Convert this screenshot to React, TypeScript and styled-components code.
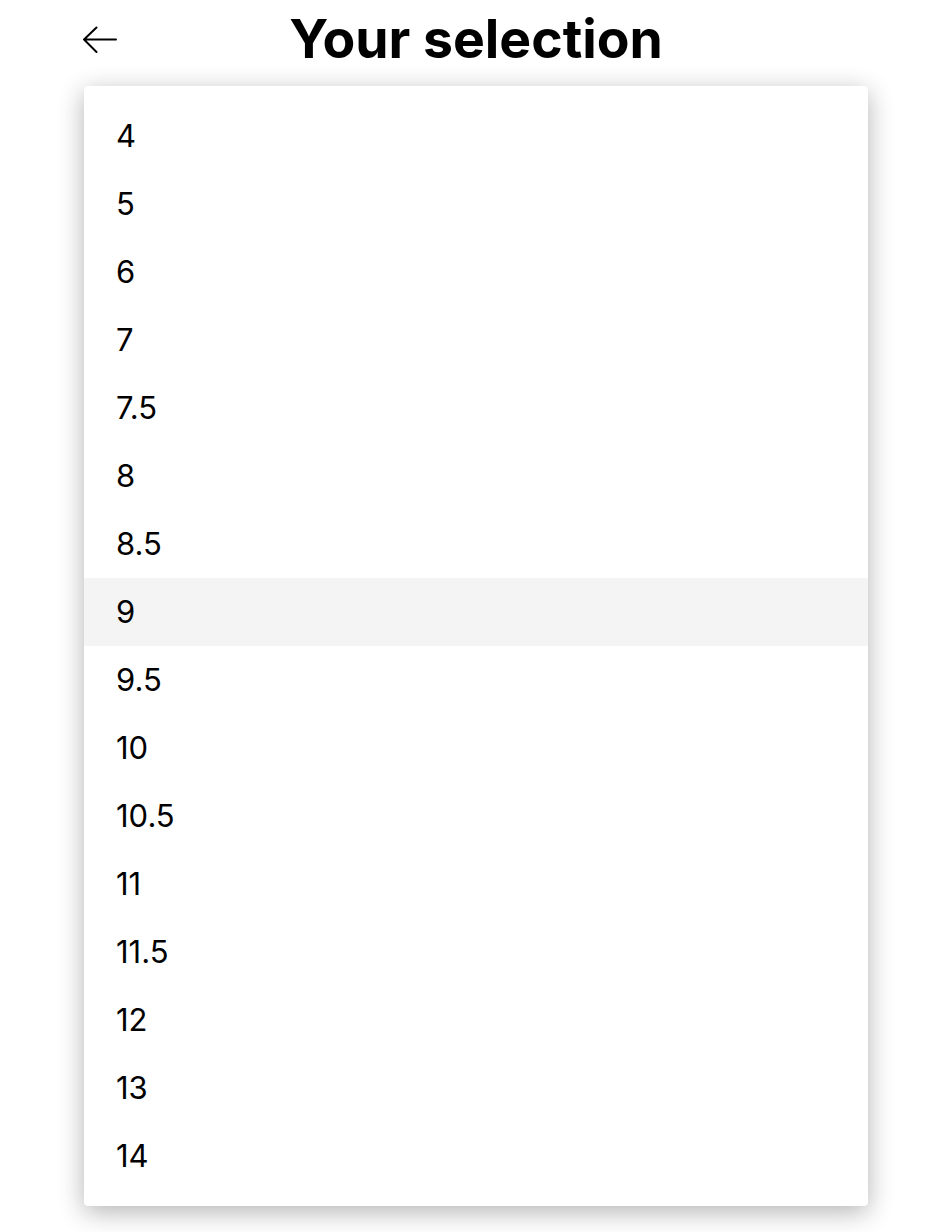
import styled, { createGlobalStyle } from "styled-components";

const GlobalStyle = createGlobalStyle`
  body {
    margin: 0;
    background: #ffffff;
    font-family: Inter, "Noto Sans", sans-serif;
    color: #000000;
  }
`;

const Page = styled.div`
  width: 784px;
  margin-left: 84px;
  padding-bottom: 26px;
`;

const Header = styled.div`
  position: relative;
  display: flex;
  align-items: center;
  justify-content: center;
  height: 78px;
`;

const BackButton = styled.button`
  position: absolute;
  left: -4px;
  top: 22px;
  width: 40px;
  height: 34px;
  padding: 0;
  border: none;
  background: none;
  cursor: pointer;
  display: flex;
  align-items: center;
  justify-content: center;
`;

const Title = styled.h1`
  margin: 0;
  font-size: 53.5px;
  font-weight: 700;
  line-height: 76px;
`;

const Panel = styled.ul`
  list-style: none;
  margin: 8px 0 0;
  padding: 16px 0;
  background: #ffffff;
  border-radius: 4px;
  box-shadow: 0 6px 26px rgba(0, 0, 0, 0.3);
`;

const Option = styled.li<{ $active?: boolean }>`
  height: 68px;
  display: flex;
  align-items: center;
  padding-left: 32px;
  padding-bottom: 2px;
  box-sizing: border-box;
  font-size: 31px;
  background: ${(props) => (props.$active ? "#f4f4f4" : "transparent")};
  cursor: pointer;
`;

const sizes = [
  "4", "5", "6", "7", "7.5", "8", "8.5", "9", "9.5", "10", "10.5", "11",
  "11.5", "12", "13", "14",
];

const App = () => {
  return (
    <Page>
      <GlobalStyle />
      <Header>
        <BackButton aria-label="Back">
          <svg width="38" height="28" viewBox="0 0 38 28" fill="none">
            <path
              d="M35 14.5H3M15.5 2.5L3 14.5l12.5 12.5"
              stroke="#000"
              strokeWidth="2"
              strokeLinecap="round"
              strokeLinejoin="round"
            />
          </svg>
        </BackButton>
        <Title>Your selection</Title>
      </Header>
      <Panel>
        {sizes.map((s) => (
          <Option key={s} $active={s === "9"}>
            {s}
          </Option>
        ))}
      </Panel>
    </Page>
  );
};

export default App;
